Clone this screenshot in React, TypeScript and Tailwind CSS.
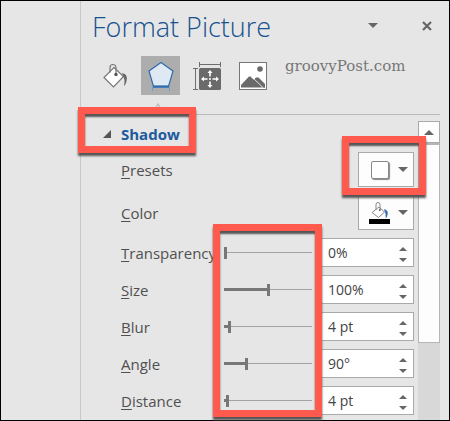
import { useState } from 'react';
import type { ReactNode } from 'react';

interface SliderSetting {
  id: string;
  label: string;
  value: number;
  max: number;
  unit: string;
}

const SETTINGS: SliderSetting[] = [
  { id: 'transparency', label: 'Transparency', value: 0, max: 100, unit: '%' },
  { id: 'size', label: 'Size', value: 100, max: 200, unit: '%' },
  { id: 'blur', label: 'Blur', value: 4, max: 80, unit: ' pt' },
  { id: 'angle', label: 'Angle', value: 90, max: 360, unit: '°' },
  { id: 'distance', label: 'Distance', value: 4, max: 150, unit: ' pt' },
];

// Red callout frame drawn over a part of the pane
function Highlight({ className }: { className: string }) {
  return (
    <div
      className={`pointer-events-none absolute z-10 border-7 border-[#ff5a4d] shadow-[0_3px_2px_#555,inset_0_3px_2px_#555] ${className}`}
    />
  );
}

// Label text with its access key underlined
function AccessLabel({ text }: { text: string }) {
  return (
    <>
      <span className="underline decoration-1 underline-offset-2">{text[0]}</span>
      {text.slice(1)}
    </>
  );
}

function Caret({ up = false, className = '' }: { up?: boolean; className?: string }) {
  return (
    <svg viewBox="0 0 10 5" className={className} aria-hidden="true">
      <path d={up ? 'M0 5 5 0l5 5z' : 'M0 0h10L5 5z'} fill="#666" />
    </svg>
  );
}

function FillIcon() {
  return (
    <svg width="26" height="26" viewBox="0 0 26 26" fill="none" aria-hidden="true">
      <path d="M12 4.500 21.500 13.500 11.500 24 2 14.500z" fill="#fff" stroke="#777" strokeWidth="1.2" />
      <path d="M8 9.500V4.500a3 3 0 0 1 6 0V11" stroke="#777" strokeWidth="1.2" />
      <circle cx="14" cy="11.500" r="1.700" fill="#555" />
      <path d="M20 10c4 1 5 3 4.800 6-.2 3-1.300 6-2.800 7 .5-3 1-6-.5-9.500z" fill="#666" />
    </svg>
  );
}

function EffectsIcon() {
  return (
    <svg width="28" height="30" viewBox="0 0 28 30" fill="none" aria-hidden="true">
      <path d="M5.500 30v-3.500h17V30" stroke="#6f9cc9" strokeWidth="1" />
      <path d="M14 1.500 26 10l-4.500 15.500h-15L2 10z" fill="#dfe9f4" stroke="#2f6aac" strokeWidth="1.200" />
      <path d="M6 25.500h16" stroke="#2f6aac" strokeWidth="2.200" />
    </svg>
  );
}

function LayoutIcon() {
  return (
    <svg width="28" height="28" viewBox="0 0 28 28" fill="none" aria-hidden="true">
      <path d="M6.500 0v5M27.500 0v5M6.500 2.500h21M0 6.500h5M0 27.500h5M2.500 6.500v21" stroke="#6e6e6e" />
      <rect x="6" y="6" width="22" height="22" rx="1.500" fill="#6a6a6a" />
      <path d="M17 10v4.500M17 19.500V24M10 17h4.500M19.500 17H24M16 17h2" stroke="#fff" strokeWidth="1.600" />
      <path
        d="m17 8 2.500 3h-5zM17 26l2.500-3h-5zM8 17l3-2.500v5zM26 17l-3-2.500v5z"
        fill="#fff"
      />
    </svg>
  );
}

function PictureIcon() {
  return (
    <svg width="28" height="28" viewBox="0 0 28 28" fill="none" aria-hidden="true">
      <rect x=".5" y=".5" width="27" height="27" fill="#fff" stroke="#777" />
      <circle cx="21" cy="7" r="2.800" fill="#6a6a6a" />
      <path d="M2 25.500V23l8-8.500h1.500l3 3 2.500-1.500 9.500 9.500z" fill="#6a6a6a" />
      <path d="M17 15.500h2.500L26 22v3.500h-1.500L16 17z" fill="#6a6a6a" />
      <path d="m15 17 9 8.500" stroke="#fff" strokeWidth=".8" />
    </svg>
  );
}

function FillColorIcon() {
  return (
    <svg width="22" height="22" viewBox="0 0 22 22" fill="none" aria-hidden="true">
      <path d="M10 5 15.500 10l-6 5.500L3 10.500z" fill="#fff" stroke="#888" />
      <path d="M7 8V2.500a1.800 1.800 0 0 1 4 0V8" stroke="#888" />
      <circle cx="10.800" cy="8" r="1" fill="#666" />
      <path d="M15.500 7.500c3.200.8 3.700 3.500 1.800 8-.5-.8-.6-1.800-.3-3.300z" fill="#2f6aac" stroke="#2f6aac" strokeWidth=".6" />
      <path d="M0 17h21v5H0z" fill="#000" />
    </svg>
  );
}

const TABS = [
  { name: 'Fill & Line', icon: <FillIcon /> },
  { name: 'Effects', icon: <EffectsIcon /> },
  { name: 'Layout & Properties', icon: <LayoutIcon /> },
  { name: 'Picture', icon: <PictureIcon /> },
];

function DropButton({ id, children }: { id: string; children: ReactNode }) {
  return (
    <button
      id={id}
      className="flex h-[35px] w-14 items-center justify-between border border-[#aaa] bg-[#fdfdfd] pr-[5px] pl-2.5"
    >
      {children}
      <Caret className="h-[5px] w-2.5" />
    </button>
  );
}

function SettingRow({ setting }: { setting: SliderSetting }) {
  const [value, setValue] = useState(setting.value);
  const step = (by: number) => setValue((v) => Math.min(setting.max, Math.max(0, v + by)));

  return (
    <div className="flex h-[29px] items-center">
      <label htmlFor={setting.id} className="min-w-0 flex-1 whitespace-nowrap">
        <AccessLabel text={setting.label} />
      </label>
      <div className="relative mr-2 flex h-3 w-[88px] items-center">
        <div className="h-px w-full bg-[#a3a3a3]" />
        <div
          className="absolute left-0 h-[3px] bg-[#777]"
          style={{ width: `${(value / setting.max) * 100}%` }}
        />
        <input
          id={setting.id}
          type="range"
          min={0}
          max={setting.max}
          value={value}
          onChange={(e) => setValue(Number(e.target.value))}
          className="absolute inset-0 m-0 w-full appearance-none bg-transparent [&::-webkit-slider-thumb]:h-3 [&::-webkit-slider-thumb]:w-[3px] [&::-webkit-slider-thumb]:appearance-none [&::-webkit-slider-thumb]:bg-[#777]"
        />
      </div>
      <div className="flex h-full w-[94px] border border-[#aaa] bg-white">
        <input
          type="text"
          aria-label={`${setting.label} value`}
          value={`${value}${setting.unit}`}
          onChange={(e) => setValue(parseInt(e.target.value, 10) || 0)}
          className="w-full min-w-0 flex-1 pl-[7px] text-[14px] text-[#444] outline-none"
        />
        <div className="flex w-5 flex-col">
          <button aria-label={`Increase ${setting.label}`} className="flex flex-1 items-center justify-center pt-1" onClick={() => step(1)}>
            <Caret up className="h-1 w-2" />
          </button>
          <button aria-label={`Decrease ${setting.label}`} className="flex flex-1 items-center justify-center" onClick={() => step(-1)}>
            <Caret className="h-1 w-2" />
          </button>
        </div>
      </div>
    </div>
  );
}

export default function App() {
  return (
    <div className="flex min-h-screen border border-black bg-[#e6e6e6] font-['Open_Sans','Noto_Sans',sans-serif] text-[15px] leading-5 text-[#505050]">
      <div className="w-20 shrink-0 border-r border-[#c8c8c8]" />

      <main className="flex min-w-0 flex-1 flex-col pr-[9px]">
        <header className="flex h-[55px] items-center justify-between pb-1 pl-[11px]">
          <h1 className="text-[27px] leading-8 font-light text-[#17518f]">Format Picture</h1>
          <div className="flex items-center gap-11 pr-2 pb-0.5">
            <button aria-label="Pane options">
              <Caret className="h-[5px] w-2.5" />
            </button>
            <button aria-label="Close">
              <svg width="10" height="10" viewBox="0 0 10 10" aria-hidden="true">
                <path d="m1 1 8 8M9 1 1 9" stroke="#666" strokeWidth="2.200" />
              </svg>
            </button>
          </div>
        </header>

        <nav className="flex items-center gap-[7px] pl-3.5">
          {TABS.map((tab) => (
            <button
              key={tab.name}
              aria-label={tab.name}
              className={`flex size-[39px] shrink-0 items-center justify-center ${tab.name === 'Effects' ? 'bg-[#adadad]' : ''}`}
            >
              {tab.icon}
            </button>
          ))}
          <span className="ml-1.5 pb-5 font-['DejaVu_Serif',serif] text-[15px] leading-4 text-[#777]">groovyPost.com</span>
        </nav>

        <div className="flex h-5 border-b border-[#bbb] pt-2 pl-[73px]">
          <svg width="8" height="6" viewBox="0 0 8 6" fill="none" aria-hidden="true">
            <path d="m1 6 3-5 3 5" stroke="#bbb" strokeWidth="1.300" />
          </svg>
        </div>

        <div className="flex flex-1 gap-1">
          <section className="min-w-0 flex-1 pl-10">
            <div className="relative -ml-[18px] flex h-[37px] items-center">
              <button className="flex items-center gap-2.5 font-bold text-[#1c5a9e]">
                <svg width="8" height="8" viewBox="0 0 8 8" aria-hidden="true">
                  <path d="M8 0v8H0z" fill="#555" />
                </svg>
                Shadow
              </button>
              <Highlight className="-top-2 -left-[25px] h-[46px] w-[118px]" />
            </div>

            <div className="flex flex-col gap-2">
              <div className="flex items-center justify-between">
                <label htmlFor="presets">
                  <AccessLabel text="Presets" />
                </label>
                <div className="relative">
                  <DropButton id="presets">
                    <span className="ml-0.5 size-[18px] rounded-xs border border-[#888] bg-white shadow-[1px_1px_1px_#888]" />
                  </DropButton>
                  <Highlight className="-top-4 -right-3 -bottom-2 -left-4" />
                </div>
              </div>
              <div className="flex items-center justify-between">
                <label htmlFor="color">
                  <AccessLabel text="Color" />
                </label>
                <DropButton id="color">
                  <FillColorIcon />
                </DropButton>
              </div>
              <div className="relative flex flex-col gap-2">
                {SETTINGS.map((setting) => (
                  <SettingRow key={setting.id} setting={setting} />
                ))}
                <Highlight className="-top-3.5 right-[92px] -bottom-0.5 w-[109px]" />
              </div>
            </div>
          </section>

          <div className="mt-1.5 flex w-[22px] flex-col bg-[#d8d8d8]">
            <button aria-label="Scroll up" className="flex h-[22px] items-center justify-center border border-[#aaa] bg-[#fdfdfd]">
              <Caret up className="h-[5px] w-2.5" />
            </button>
            <div className="h-[200px] border border-t-2 border-[#b5b5b5] bg-[#fdfdfd]" />
          </div>
        </div>
      </main>
    </div>
  );
}
